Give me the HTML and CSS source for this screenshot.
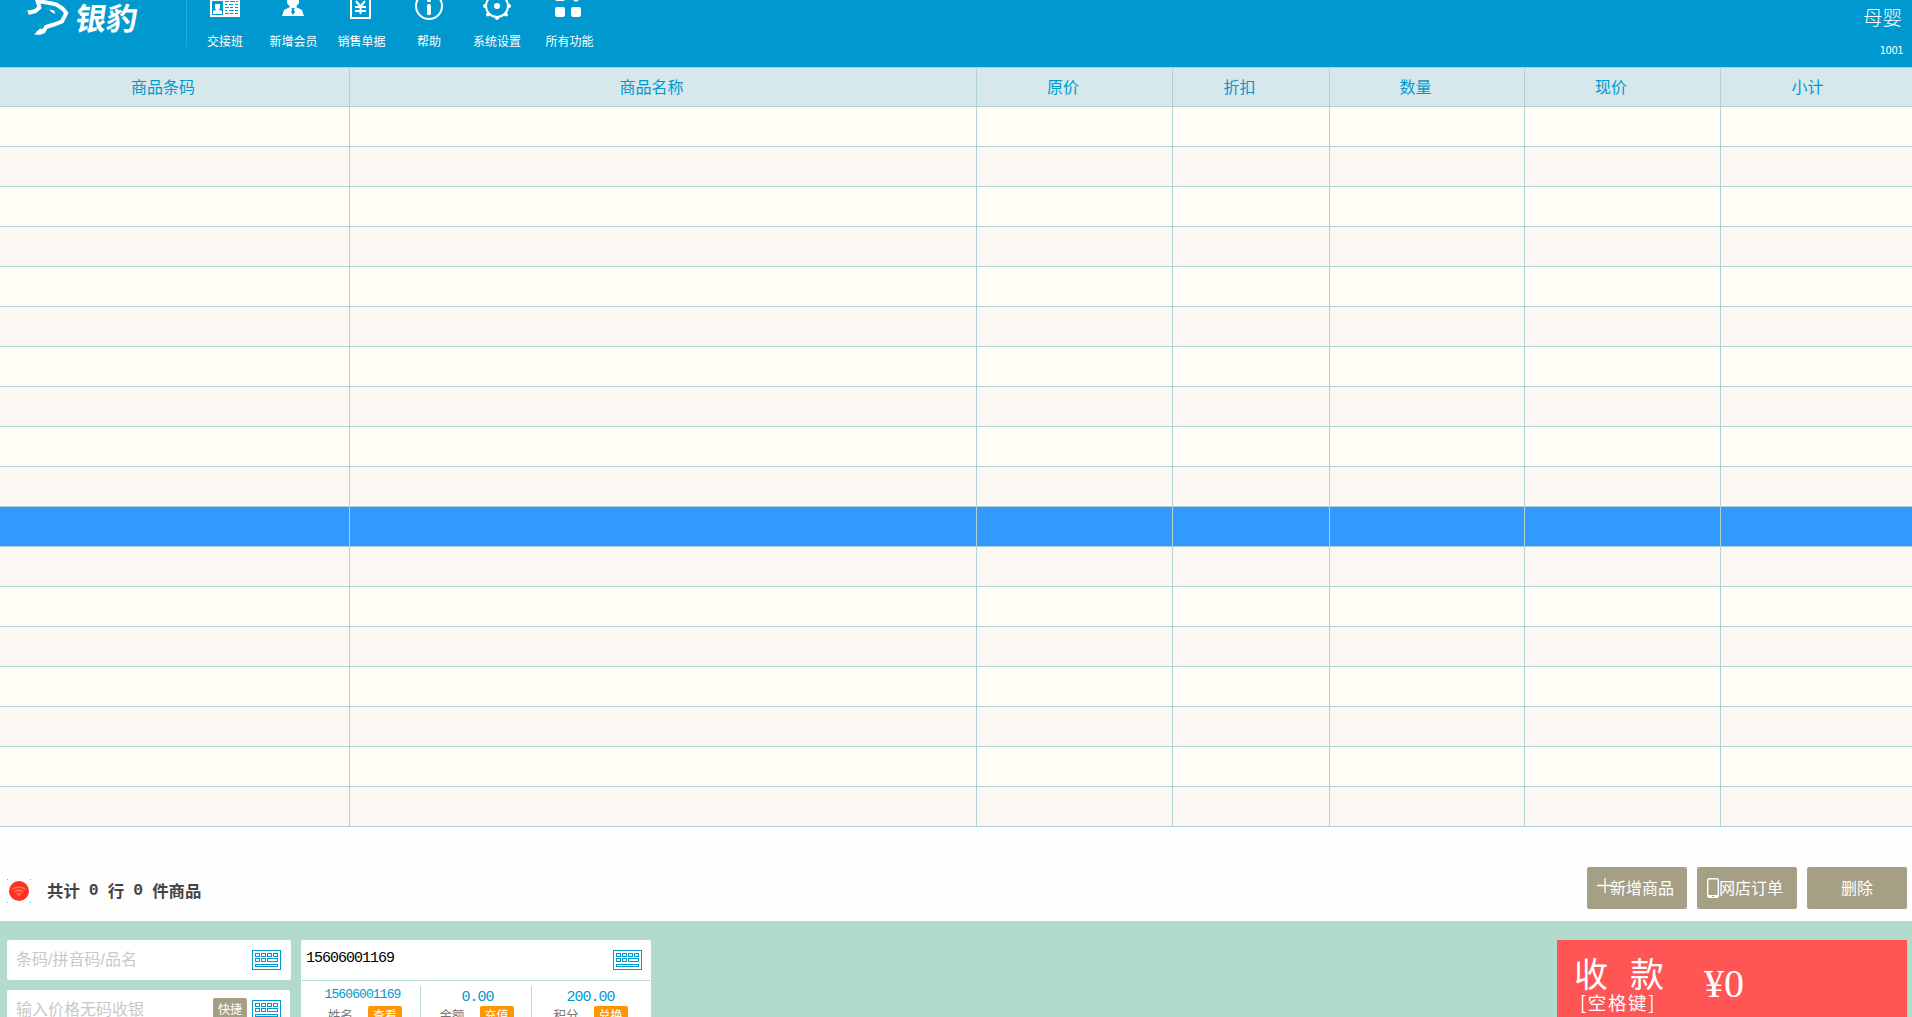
FILE: index.html
```
<!DOCTYPE html>
<html lang="zh-CN">
<head>
<meta charset="utf-8">
<title>银豹收银</title>
<link rel="stylesheet" href="styles.css">
</head>
<body>
<svg width="0" height="0" class="defs">
  <symbol id="keyboard" viewBox="0 0 29 20">
    <g fill="none" stroke="#0099cf" stroke-width="1">
      <rect x=".5" y=".5" width="28" height="19"/>
      <rect x="3.5" y="3.5" width="4" height="3"/><rect x="9.5" y="3.5" width="4" height="3"/><rect x="15.5" y="3.5" width="4" height="3"/><rect x="21.5" y="3.5" width="4" height="3"/>
      <rect x="3.5" y="8.5" width="4" height="3"/><rect x="9.5" y="8.5" width="4" height="3"/><rect x="15.5" y="8.5" width="10" height="3"/>
      <rect x="3.5" y="14.5" width="22" height="2"/>
    </g>
  </symbol>
</svg>
<header class="topbar">
  <div class="brand">
    <svg class="leopard" width="43" height="35" viewBox="0 0 43 35"><path fill="none" stroke="#fff" stroke-width="4" d="M1 12.500l7-1.200 4.500-3.800-2-6.500 13.500 2.200 5.500 1.300 6 4 3.700 4.500-4.200 8.500-8 3-8 2.500-2.500 4.500-6.500 1.500"/><path fill="#fff" d="M0 10l3 5 3-2zM7 34.500l6-6 5 1-3 5zM22 9.500l5 1 1.500 3.500-3.500-1.500z"/></svg>
    <span class="brand-name">银豹</span>
  </div>
  <nav class="menu">
    <a class="item i1"><svg width="30" height="17" viewBox="0 0 30 17"><path fill="#fff" d="M0-3h30v20H0z"/><path fill="none" stroke="#0099cf" d="M15 1.500h4m1 0h5m1 0h2M15 4.500h2m2 0h4m2 0h3M15 7.500h4m1 0h3m2 0h3M15 10.500h2m2 0h5m1 0h3M15 13.500h4m1 0h3m2 0h3"/><path fill="#0099cf" d="M2 1h11v14H2z"/><path fill="#fff" d="M5 4h5v4l-1 2 3 1v3H3v-3l3-1-1-2z"/></svg><span>交接班</span></a>
    <a class="item i2"><svg width="22" height="17" viewBox="0 0 22 17"><path fill="#fff" d="M5-3h12v6l-3 4 6 3 2 6H0l2-6 6-3-3-4z"/><path fill="#0099cf" d="M9.500 8h3l-.5 2 1 2-2 3-2-3 1-2z"/></svg><span>新增会员</span></a>
    <a class="item i3"><svg width="21" height="19" viewBox="0 0 21 19"><path fill="none" stroke="#fff" stroke-width="2" d="M1-1v19h19V-1"/><path fill="none" stroke="#fff" stroke-width="2" d="M6 1l4.500 5.500L15 1M10.500 6v8M5 7h11M5 11h11"/></svg><span>销售单据</span></a>
    <a class="item i4"><svg width="28" height="20" viewBox="0 0 28 20"><circle cx="14" cy="6" r="13" fill="none" stroke="#fff" stroke-width="2"/><rect x="12" y="4" width="4" height="11" rx="1.500" fill="#fff"/><rect x="12" y="-2" width="4" height="4" rx="1" fill="#fff"/></svg><span>帮助</span></a>
    <a class="item i5"><svg width="28" height="20" viewBox="0 0 28 20"><circle cx="14" cy="6" r="11" fill="none" stroke="#fff" stroke-width="2"/><circle cx="14" cy="6" r="3" fill="#fff"/><g fill="#fff"><circle cx="2" cy="6" r="2"/><circle cx="26" cy="6" r="2"/><circle cx="5" cy="14.500" r="2"/><circle cx="23" cy="14.500" r="2"/><circle cx="14" cy="18" r="2"/></g></svg><span>系统设置</span></a>
    <a class="item i6"><svg width="26" height="17" viewBox="0 0 26 17"><g fill="#fff"><rect y="-9" width="10" height="10" rx="2"/><rect y="7" width="10" height="10" rx="2"/><rect x="16" y="7" width="10" height="10" rx="2"/><path d="M18 0h6l-3 2z"/></g></svg><span>所有功能</span></a>
  </nav>
  <div class="account"><span class="shop">母婴</span><span class="cashier">1001</span></div>
</header>
<main>
<table class="goods">
  <colgroup><col class="c1"><col class="c2"><col class="c3"><col class="c4"><col class="c5"><col class="c6"><col class="c7"></colgroup>
  <thead><tr><th>商品条码</th><th>商品名称</th><th>原价</th><th>折扣</th><th>数量</th><th>现价</th><th>小计</th></tr></thead>
  <tbody>
    <tr><td><td><td><td><td><td><td></tr>
    <tr><td><td><td><td><td><td><td></tr>
    <tr><td><td><td><td><td><td><td></tr>
    <tr><td><td><td><td><td><td><td></tr>
    <tr><td><td><td><td><td><td><td></tr>
    <tr><td><td><td><td><td><td><td></tr>
    <tr><td><td><td><td><td><td><td></tr>
    <tr><td><td><td><td><td><td><td></tr>
    <tr><td><td><td><td><td><td><td></tr>
    <tr><td><td><td><td><td><td><td></tr>
    <tr class="selected"><td><td><td><td><td><td><td></tr>
    <tr><td><td><td><td><td><td><td></tr>
    <tr><td><td><td><td><td><td><td></tr>
    <tr><td><td><td><td><td><td><td></tr>
    <tr><td><td><td><td><td><td><td></tr>
    <tr><td><td><td><td><td><td><td></tr>
    <tr><td><td><td><td><td><td><td></tr>
    <tr><td><td><td><td><td><td><td></tr>
  </tbody>
</table>
<section class="summary">
  <svg class="signal" width="24" height="24" viewBox="0 0 24 24"><path fill="#4bb8de" d="M0 0h1v1H0zM23 0h1v1h-1zM0 23h1v1H0zM23 23h1v1h-1z"/><circle cx="12" cy="12" r="10" fill="#ff331c"/><g fill="none" stroke="#ff7d68" stroke-width="1.300"><path d="M5.500 10.500q6.500-5 13 0M7.500 13q4.500-3.500 9 0M9.500 15.200q2.500-1.800 5 0"/></g><circle cx="12" cy="16.500" r="1" fill="#ff7d68"/></svg>
  <p class="total"><span>共计</span><span class="num">0</span><span>行</span><span class="num">0</span><span>件商品</span></p>
  <div class="actions">
    <button class="btn add"><svg width="15" height="16" viewBox="0 0 15 16"><path stroke="#fff" d="M0 7.500h15M8 0v15" fill="none" stroke-width="1.300"/></svg>新增商品</button>
    <button class="btn shop-order"><svg width="12" height="20" viewBox="0 0 12 20"><rect x=".7" y=".7" width="10.600" height="18.600" rx="1.500" fill="none" stroke="#fff" stroke-width="1.400"/><path fill="#fff" d="M1 17h10v2H1z"/><path fill="#a59f86" d="M5 18h2v1H5z"/></svg>网店订单</button>
    <button class="btn">删除</button>
  </div>
</section>
<section class="checkout">
  <div class="entry">
    <div class="field"><span>条码/拼音码/品名</span><svg class="kb" width="29" height="20"><use href="#keyboard"/></svg></div>
    <div class="field price"><span>输入价格无码收银</span><b class="quick">快捷</b><svg class="kb" width="29" height="20"><use href="#keyboard"/></svg></div>
  </div>
  <div class="member">
    <div class="member-id"><span>15606001169</span><svg class="kb" width="29" height="20"><use href="#keyboard"/></svg></div>
    <div class="stats">
      <div class="stat name"><em>15606001169</em><p>姓名<b>查看</b></p></div>
      <div class="stat"><em>0.00</em><p>金额<b>充值</b></p></div>
      <div class="stat points"><em>200.00</em><p>积分<b>兑换</b></p></div>
    </div>
  </div>
  <div class="pay">
    <div class="pay-label"><span class="pay-title"><i>收</i><i>款</i></span><span class="pay-key">[空格键]</span></div>
    <span class="amount">¥0</span>
  </div>
</section>
</main>
</body>
</html>
```
FILE: styles.css
```
* { box-sizing: border-box; }
body { margin: 0; width: 1912px; height: 1017px; overflow: hidden; background: #fefefe; font-family: "Liberation Sans", "Noto Sans CJK SC", sans-serif; font-weight: 400; }
p { margin: 0; }
i, em { font-style: normal; }
.defs { display: block; height: 0; }
svg { display: block; flex: none; }

.topbar { display: flex; height: 67px; background: #0099cf; color: #fff; }
.brand { display: flex; width: 187px; height: 47px; padding-left: 27px; border-right: 1px solid #25a9e5; }
.brand-name { margin-left: 5px; font-size: 31px; line-height: 33px; font-weight: 700; font-family: "Noto Sans CJK SC", sans-serif; transform: skewX(-8deg); white-space: nowrap; }
.menu { display: grid; grid-template-columns: 76px 61px 75px 60px 76px 69px; }
.item { display: grid; grid-template-rows: 33px 20px; justify-items: center; font-size: 12px; line-height: 18px; white-space: nowrap; }
.i2 svg, .i3 svg { margin-left: -2px; }
.i6 svg { margin-left: -3px; }
.account { margin-left: auto; display: flex; flex-direction: column; align-items: flex-end; padding-right: 10px; }
.shop { padding-top: 1px; font-size: 19.500px; line-height: 35px; font-weight: 300; }
.cashier { margin-right: -1px; font-size: 11px; line-height: 30px; font-family: "DejaVu Sans Condensed", "DejaVu Sans", sans-serif; letter-spacing: -.5px; }

.goods { width: 1912px; table-layout: fixed; border-collapse: separate; border-spacing: 0; border-top: 1px solid #b0d3d8; }
.c1 { width: 350px; } .c2 { width: 627px; } .c3 { width: 196px; } .c4 { width: 157px; } .c5 { width: 195px; } .c6 { width: 196px; } .c7 { width: 191px; }
.goods th { height: 39px; padding: 2px 23px 0 0; background: #d6e8ec; color: #0099cf; font-size: 16px; font-weight: 400; line-height: 20px; }
.goods td { height: 40px; padding: 0; background: #fffdf6; }
.goods th, .goods td { border-right: 1px solid #b0d3d8; border-bottom: 1px solid #b0d3d8; }
.goods th:last-child, .goods td:last-child { border-right: 0; }
.goods th:last-child { padding-right: 18px; }
.goods tr:nth-child(even) td { background: #fbf8f3; }
.goods tr.selected td { background: #3399ff; }

.summary { display: flex; height: 94px; padding: 40px 5px 12px 7px; }
.signal { margin-top: 12px; }
.total { display: flex; margin-left: 16px; padding-top: 12px; color: #444; font-size: 16.400px; line-height: 24px; font-weight: 700; }
.num { width: 28px; text-align: center; font-family: "Liberation Mono", monospace; }
.actions { display: flex; gap: 10px; margin-left: auto; }
.btn { display: flex; align-items: center; justify-content: center; width: 100px; height: 42px; padding: 0 0 2px; border: 0; border-radius: 2px; background: #a59f86; color: #fff; font: 400 16px "Noto Sans CJK SC", sans-serif; white-space: nowrap; }
.add, .shop-order { justify-content: flex-start; padding: 0 0 2px 10px; }
.add svg { margin: -2px -2px 0 0; }
.shop-order svg { margin: 2px 0 0; }

.checkout { display: flex; height: 96px; padding: 19px 5px 0 7px; background: #b2dbce; overflow: hidden; }
.entry { display: flex; flex-direction: column; gap: 10px; width: 284px; margin-right: 10px; }
.field { display: flex; flex: none; align-items: center; height: 40px; padding: 0 10px 0 9px; background: #fff; border-radius: 2px; color: #c8c8c8; font-size: 16px; }
.field span { margin-top: -4px; }
.kb { margin-left: auto; }
.price { width: 283px; padding-right: 9px; }
.quick { margin: 0 0 0 auto; width: 34px; height: 24px; border-radius: 2px; background: #a59f86; color: #fff; font-size: 12px; font-weight: 400; line-height: 24px; text-align: center; }
.price .kb { margin: 0 0 0 5px; }
.member { width: 350px; height: 90px; background: #fff; border-radius: 2px; }
.member-id { display: flex; height: 41px; margin: 0 1px; padding: 10px 8px 0 4px; border-bottom: 1px solid #b2dbce; color: #000; font: 15px/18px "Liberation Mono", monospace; letter-spacing: -1px; }
.stats { display: grid; grid-template-columns: 120px 111px 119px; padding-top: 5px; }
.stat { height: 50px; border-right: 1px solid #b2dbce; color: #0099cf; text-align: center; font-family: "Liberation Mono", "Noto Sans CJK SC", monospace; }
.stat:last-child { border-right: 0; }
.stat em { display: block; height: 20px; padding-left: 3px; font-size: 15px; line-height: 23px; letter-spacing: -1px; }
.stat.points em { padding: 0 2px 0 0; }
.stat.name em { font-size: 13px; line-height: 17px; letter-spacing: -.9px; padding-left: 4px; }
.stat p { display: flex; justify-content: center; gap: 15px; padding-left: 1px; color: #777; font-size: 12.500px; line-height: 22px; }
.stat.name p { padding-left: 9px; }
.stat.points p { padding: 0 2px 0 0; }
.stat b { width: 34px; height: 24px; border-radius: 2px; background: #ff9500; color: #fff; font-size: 12px; font-weight: 400; line-height: 22px; }
.pay { display: flex; width: 350px; height: 90px; margin-left: auto; padding-left: 17px; background: #ff5555; color: #fff; font-family: "Liberation Serif", "Noto Sans CJK SC", serif; }
.pay-label { width: 90px; }
.pay-title { display: flex; justify-content: space-between; height: 52px; padding-top: 16px; font: 400 34px/34px "Noto Sans CJK SC", sans-serif; }
.pay-key { display: block; padding-left: 6px; font: 400 18.500px/21px "Noto Sans CJK SC", sans-serif; letter-spacing: 1.600px; white-space: nowrap; }
.amount { margin-left: 40px; font-size: 40px; line-height: 87px; }
```
